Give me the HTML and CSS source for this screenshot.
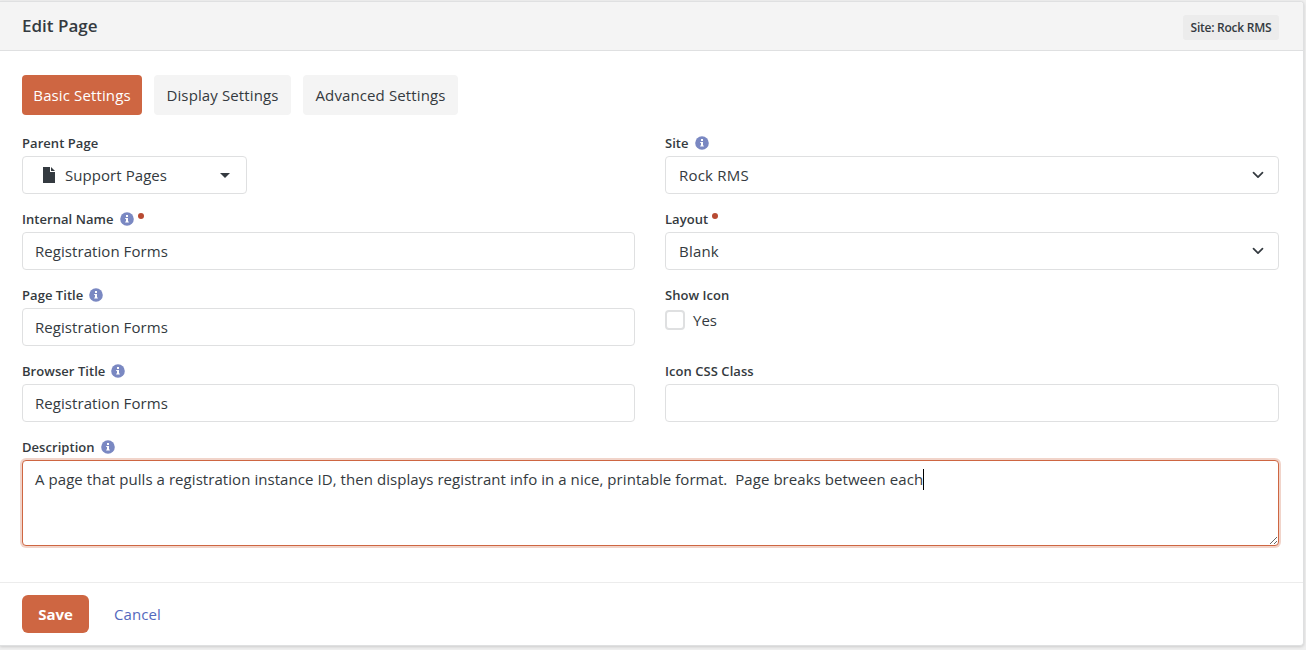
FILE: index.html
```
<!DOCTYPE html>
<html lang="en">
<head>
<meta charset="UTF-8">
<meta name="viewport" content="width=device-width, initial-scale=1.0">
<title>Edit Page</title>
<link rel="stylesheet" href="styles.css">
</head>
<body>

<!-- Shared icons -->
<svg class="sprite" width="0" height="0" aria-hidden="true">
  <symbol id="info" viewBox="0 0 14 14">
    <circle cx="7" cy="7" r="6.8" fill="#7a88c2"/>
    <path d="M6 3h2v2H6zM5.2 5.9H8v3.6h.8v1.1H5.2V9.500H6V7h-.8z" fill="#fff"/>
  </symbol>
  <symbol id="chevron" viewBox="0 0 16 16">
    <path d="M3.500 5.700l4.500 4.500 4.500-4.500" fill="none" stroke="#343a40" stroke-width="1.700" stroke-linecap="round" stroke-linejoin="round"/>
  </symbol>
</svg>

<form class="panel">
  <div class="panel-heading">
    <h1 class="panel-title">Edit Page</h1>
    <span class="label-site">Site: Rock RMS</span>
  </div>

  <div class="panel-body">
    <div class="nav-pills">
      <a class="pill pill-basic active">Basic Settings</a>
      <a class="pill pill-display">Display Settings</a>
      <a class="pill pill-advanced">Advanced Settings</a>
    </div>

    <div class="row">
      <div class="form-group">
        <label class="control-label">Parent Page</label>
        <div class="form-control picker">
          <svg class="file-icon" width="12" height="16" viewBox="0 0 12 16"><path d="M0 0h7v5h5v11H0zM8 0l4 4H8z" fill="#343a40"/></svg>
          <span class="picker-text">Support Pages</span>
          <span class="caret"></span>
        </div>
      </div>
      <div class="form-group">
        <label class="control-label">Site <svg class="info"><use href="#info"/></svg></label>
        <div class="form-control select">Rock RMS <svg class="chevron"><use href="#chevron"/></svg></div>
      </div>

      <div class="form-group">
        <label class="control-label">Internal Name <svg class="info"><use href="#info"/></svg><span class="required"></span></label>
        <input class="form-control" type="text" value="Registration Forms">
      </div>
      <div class="form-group">
        <label class="control-label">Layout <span class="required"></span></label>
        <div class="form-control select">Blank <svg class="chevron"><use href="#chevron"/></svg></div>
      </div>

      <div class="form-group">
        <label class="control-label">Page Title <svg class="info"><use href="#info"/></svg></label>
        <input class="form-control" type="text" value="Registration Forms">
      </div>
      <div class="form-group">
        <label class="control-label">Show Icon</label>
        <label class="checkbox"><input type="checkbox"><span>Yes</span></label>
      </div>

      <div class="form-group">
        <label class="control-label">Browser Title <svg class="info"><use href="#info"/></svg></label>
        <input class="form-control" type="text" value="Registration Forms">
      </div>
      <div class="form-group">
        <label class="control-label">Icon CSS Class</label>
        <input class="form-control" type="text">
      </div>
    </div>

    <div class="form-group">
      <label class="control-label">Description <svg class="info"><use href="#info"/></svg></label>
      <div class="form-control description" role="textbox"><span class="description-text">A page that pulls a registration instance ID, then displays registrant info in a nice, printable format.  Page breaks between each</span><span class="cursor"></span></div>
    </div>
  </div>

  <div class="actions">
    <button class="btn-save" type="button">Save</button>
    <a class="btn-cancel">Cancel</a>
  </div>
</form>

</body>
</html>
```
FILE: styles.css
```
* {
  box-sizing: border-box;
}

body {
  margin: 0;
  height: 650px;
  padding: 1px 2px 0 0;
  overflow: hidden;
  background-color: #efefef;
  color: #343a40;
  font-family: "Open Sans", "Noto Sans", sans-serif;
  font-size: 15px;
  line-height: 24px;
}

.sprite {
  position: absolute;
}

.panel {
  height: 645px;
  border: 1px solid #dfe0e1;
  border-left: 0;
  border-radius: 0 4px 4px 0;
  background-color: #fff;
  box-shadow: 0 1px 3px rgba(0, 0, 0, 0.15);
  overflow: hidden;
}

.panel-heading {
  display: flex;
  justify-content: space-between;
  align-items: center;
  height: 49px;
  padding: 0 24px 0 22px;
  background-color: #f4f4f4;
  border-bottom: 1px solid #dfe0e1;
}

.panel-title {
  margin: 0;
  font-size: 17px;
  font-weight: 600;
}

.label-site {
  width: 96px;
  height: 25px;
  margin-top: 3px;
  border-radius: 3px;
  background-color: #ececec;
  font-size: 12px;
  font-weight: 600;
  line-height: 25px;
  text-align: center;
  white-space: nowrap;
  letter-spacing: -0.25px;
}

.panel-body {
  height: 531px;
  padding: 24px 24px 0 22px;
}

.nav-pills {
  display: flex;
  gap: 12px;
  margin-bottom: 17px;
}

.pill {
  height: 40px;
  border-radius: 4px;
  background-color: #f4f4f4;
  line-height: 40px;
  text-align: center;
  white-space: nowrap;
  letter-spacing: 0.12px;
}

.pill.active {
  background-color: #ce6642;
  color: #fff;
}

.pill-basic { width: 120px; }
.pill-display { width: 137px; }
.pill-advanced { width: 155px; }

.row {
  display: grid;
  grid-template-columns: 613px 1fr;
  column-gap: 30px;
}

.form-group {
  height: 76px;
}

.control-label {
  display: flex;
  align-items: center;
  height: 24px;
  padding-bottom: 3px;
  font-size: 13px;
  font-weight: 600;
  white-space: nowrap;
  letter-spacing: 0.05px;
}

.info {
  width: 14px;
  height: 14px;
  margin-left: 6px;
}

.required {
  width: 6px;
  height: 6px;
  margin: -5px 0 0 4px;
  border-radius: 50%;
  background-color: #b84a32;
}

.form-control {
  display: block;
  width: 100%;
  height: 38px;
  padding: 0 12px;
  border: 1px solid #dfe0e1;
  border-radius: 4px;
  background-color: #fff;
  color: inherit;
  font: inherit;
  line-height: 36px;
  letter-spacing: 0.06px;
}

.select {
  display: flex;
  justify-content: space-between;
  align-items: center;
  padding-left: 13px;
  letter-spacing: 0.2px;
}

.chevron {
  width: 16px;
  height: 16px;
}

.picker {
  display: flex;
  align-items: center;
  width: 225px;
  padding: 0 16px 0 20px;
}

.picker-text {
  flex: 1;
  margin-left: 10px;
}

.caret {
  border: 5px solid transparent;
  border-top-color: #343a40;
  border-bottom: 0;
}

.checkbox {
  display: flex;
  align-items: center;
  height: 24px;
}

.checkbox input {
  appearance: none;
  width: 20px;
  height: 20px;
  margin: 0 8px 0 0;
  border: 2px solid #dfe0e1;
  border-radius: 4px;
}

/* Focused multi-line field */
.description {
  height: 86px;
  padding: 6px 12px;
  border-color: #ce6642;
  box-shadow: 0 0 0 2px rgba(206, 102, 66, 0.28);
  line-height: 24px;
  white-space: pre-wrap;
  overflow: auto;
  resize: vertical;
}

.cursor {
  display: inline-block;
  width: 1px;
  height: 21px;
  background-color: #000;
  vertical-align: -5px;
}

.actions {
  display: flex;
  align-items: center;
  height: 63px;
  padding-left: 22px;
  border-top: 1px solid #ececec;
}

.btn-save {
  width: 67px;
  height: 38px;
  padding: 0;
  border: 0;
  border-radius: 6px;
  background-color: #ce6642;
  color: #fff;
  font: inherit;
  font-weight: 700;
}

.btn-cancel {
  margin-left: 25px;
  color: #5469bd;
  letter-spacing: 0.1px;
}
```
